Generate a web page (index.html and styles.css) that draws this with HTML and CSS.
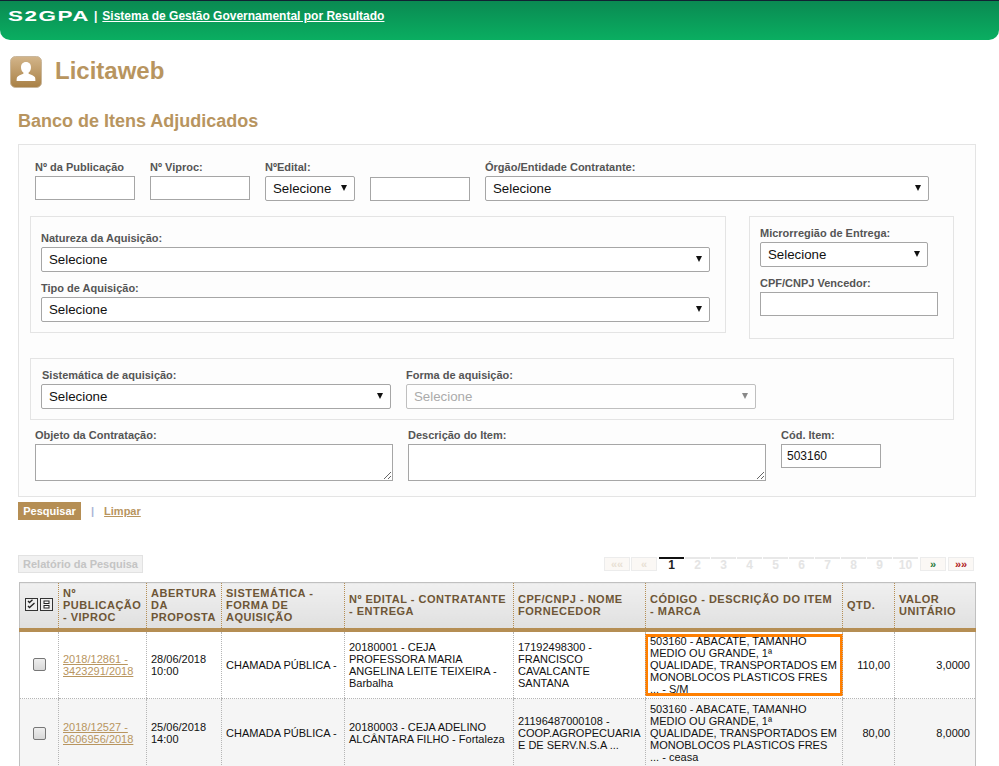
FILE: index.html
```html
<!DOCTYPE html>
<html lang="pt-BR">
<head>
  <meta charset="UTF-8">
  <title>Licitaweb</title>
  <link rel="stylesheet" href="styles.css">
</head>
<body>
  <header class="topo">
    <span class="logo-box"><span class="logo">S2GPA</span></span>
    <span class="barra">|</span>
    <a href="#" class="sistema">Sistema de Gestão Governamental por Resultado</a>
  </header>

  <div class="modulo">
    <svg class="modulo-icone" width="33" height="33" viewBox="0 0 33 33">
      <defs>
        <linearGradient id="tan" x1="0" y1="0" x2="0" y2="1">
          <stop offset="0" stop-color="#d3b58a"/>
          <stop offset="1" stop-color="#a88045"/>
        </linearGradient>
      </defs>
      <rect x="0.5" y="0.5" width="31" height="31" rx="5" fill="url(#tan)" stroke="#c9b79c"/>
      <path d="M16 6c-3.300 0-5 2.400-5 5.300 0 2.400 1 4.300 2.400 5.300v1.200c-2.600 0.800-5.400 2-6.400 3.500-0.400 0.700-0.400 3.700-0.400 3.700h18.800s0-3-0.400-3.700c-1-1.500-3.800-2.700-6.400-3.500v-1.200c1.400-1 2.400-2.900 2.400-5.300 0-2.900-1.700-5.300-5-5.300z" fill="#fff"/>
    </svg>
    <h1>Licitaweb</h1>
  </div>

  <h2>Banco de Itens Adjudicados</h2>

  <form class="filtros">
    <div class="linha linha-topo">
      <div class="campo c100">
        <label>Nº da Publicação</label>
        <input type="text">
      </div>
      <div class="campo c100">
        <label>Nº Viproc:</label>
        <input type="text">
      </div>
      <div class="campo c90">
        <label>NºEdital:</label>
        <div class="sel"><select><option>Selecione</option></select></div>
      </div>
      <div class="campo c100 sem-label">
        <input type="text">
      </div>
      <div class="campo c444">
        <label>Órgão/Entidade Contratante:</label>
        <div class="sel"><select><option>Selecione</option></select></div>
      </div>
    </div>

    <div class="grupos">
      <fieldset class="grupo grupo-natureza">
        <label>Natureza da Aquisição:</label>
        <div class="sel"><select><option>Selecione</option></select></div>
        <label class="label-2">Tipo de Aquisição:</label>
        <div class="sel"><select><option>Selecione</option></select></div>
      </fieldset>
      <fieldset class="grupo grupo-micro">
        <label>Microrregião de Entrega:</label>
        <div class="sel sel-micro"><select><option>Selecione</option></select></div>
        <label class="label-2">CPF/CNPJ Vencedor:</label>
        <input type="text">
      </fieldset>
    </div>

    <fieldset class="grupo grupo-sistematica">
      <div class="campo c350">
        <label>Sistemática de aquisição:</label>
        <div class="sel"><select><option>Selecione</option></select></div>
      </div>
      <div class="campo c350">
        <label>Forma de aquisição:</label>
        <div class="sel sel-off"><select disabled><option>Selecione</option></select></div>
      </div>
    </fieldset>

    <div class="linha linha-textos">
      <div class="campo c358">
        <label>Objeto da Contratação:</label>
        <textarea></textarea>
      </div>
      <div class="campo c358">
        <label>Descrição do Item:</label>
        <textarea></textarea>
      </div>
      <div class="campo c100">
        <label>Cód. Item:</label>
        <input type="text" value="503160">
      </div>
    </div>
  </form>

  <div class="acoes">
    <a href="#" class="btn-pesquisar">Pesquisar</a>
    <span class="sep">|</span>
    <a href="#" class="limpar">Limpar</a>
  </div>

  <div class="barra-resultado">
    <a href="#" class="btn-relatorio">Relatório da Pesquisa</a>
    <div class="paginas">
      <a href="#" class="pg-seta pg-off">««</a>
      <a href="#" class="pg-seta pg-off">«</a>
      <a href="#" class="pg pg-atual">1</a>
      <a href="#" class="pg">2</a>
      <a href="#" class="pg">3</a>
      <a href="#" class="pg">4</a>
      <a href="#" class="pg">5</a>
      <a href="#" class="pg">6</a>
      <a href="#" class="pg">7</a>
      <a href="#" class="pg">8</a>
      <a href="#" class="pg">9</a>
      <a href="#" class="pg">10</a>
      <a href="#" class="pg-seta pg-prox">»</a>
      <a href="#" class="pg-seta pg-ult">»»</a>
    </div>
  </div>

  <table class="tabela">
    <colgroup>
      <col class="col-check">
      <col class="col-pub">
      <col class="col-abertura">
      <col class="col-sist">
      <col class="col-edital">
      <col class="col-cnpj">
      <col class="col-item">
      <col class="col-qtd">
      <col class="col-valor">
    </colgroup>
    <thead>
      <tr>
        <th class="th-check">
          <svg width="29" height="14" viewBox="0 0 29 14">
            <rect x="0.500" y="0.500" width="12" height="12" fill="#eee" stroke="#333"/>
            <path d="M3 3l1.500 1.500L7.500 1.800M3 8l1.500 1.500L9.500 5" fill="none" stroke="#222" stroke-width="1.300"/>
            <rect x="15.500" y="0.500" width="12" height="12" fill="#eee" stroke="#333"/>
            <rect x="19" y="3" width="5" height="2.500" fill="#fff" stroke="#222"/>
            <rect x="19" y="7.500" width="5" height="2.500" fill="#fff" stroke="#222"/>
          </svg>
        </th>
        <th>Nº Publicação - Viproc</th>
        <th>Abertura da Proposta</th>
        <th>Sistemática - Forma de Aquisição</th>
        <th>Nº Edital - Contratante - Entrega</th>
        <th>CPF/CNPJ - Nome Fornecedor</th>
        <th>Código - Descrição do Item - Marca</th>
        <th>Qtd.</th>
        <th>Valor Unitário</th>
      </tr>
    </thead>
    <tbody>
      <tr>
        <td class="td-check"><input type="checkbox"></td>
        <td><a href="#">2018/12861 - 3423291/2018</a></td>
        <td>28/06/2018 10:00</td>
        <td>CHAMADA PÚBLICA -</td>
        <td>20180001 - CEJA PROFESSORA MARIA ANGELINA LEITE TEIXEIRA - Barbalha</td>
        <td>17192498300 - FRANCISCO CAVALCANTE SANTANA</td>
        <td class="td-destaque">
          <div class="destaque"><div>503160 - ABACATE, TAMANHO MEDIO OU GRANDE, 1ª QUALIDADE, TRANSPORTADOS EM MONOBLOCOS PLASTICOS FRES ... - S/M</div></div>
        </td>
        <td class="num">110,00</td>
        <td class="num">3,0000</td>
      </tr>
      <tr class="par">
        <td class="td-check"><input type="checkbox"></td>
        <td><a href="#">2018/12527 - 0606956/2018</a></td>
        <td>25/06/2018 14:00</td>
        <td>CHAMADA PÚBLICA -</td>
        <td>20180003 - CEJA ADELINO ALCÂNTARA FILHO - Fortaleza</td>
        <td>21196487000108 - COOP.AGROPECUARIA E DE SERV.N.S.A ...</td>
        <td>503160 - ABACATE, TAMANHO MEDIO OU GRANDE, 1ª QUALIDADE, TRANSPORTADOS EM MONOBLOCOS PLASTICOS FRES ... - ceasa</td>
        <td class="num">80,00</td>
        <td class="num">8,0000</td>
      </tr>
    </tbody>
  </table>
</body>
</html>
```

FILE: styles.css
```css
* {
  box-sizing: border-box;
}

html {
  overflow: hidden;
}

body {
  margin: 0;
  font-family: "Liberation Sans", Arial, sans-serif;
  font-size: 12px;
  color: #111;
  background: #fff;
}

/* topo */
.topo {
  height: 40px;
  padding: 8px 0 0 8px;
  display: flex;
  align-items: flex-start;
  background: linear-gradient(to bottom, #0a8a52, #0aae61);
  border-top: 1px solid #123;
  border-bottom-left-radius: 10px;
  border-bottom-right-radius: 10px;
  color: #fff;
}

.logo-box {
  width: 81px;
  height: 14px;
  display: block;
}

.logo {
  display: inline-block;
  font-size: 15px;
  font-weight: bold;
  line-height: 14px;
  letter-spacing: 1px;
  transform: scaleX(1.5);
  transform-origin: left center;
}

.barra {
  margin-left: 5px;
  font-size: 12px;
  font-weight: bold;
  line-height: 14px;
}

.sistema {
  margin-left: 5px;
  font-size: 12px;
  font-weight: bold;
  line-height: 14px;
  color: #fff;
}

/* titulos */
.modulo {
  height: 33px;
  margin: 16px 0 0 10px;
  display: flex;
  align-items: center;
}

.modulo-icone {
  flex: none;
}

h1 {
  margin: 0 0 4px 12px;
  font-size: 24px;
  color: #b8955f;
}

h2 {
  margin: 22px 0 12px 18px;
  font-size: 18px;
  line-height: 21px;
  color: #b8955f;
}

/* filtros */
.filtros {
  width: 958px;
  height: 353px;
  margin-left: 18px;
  padding: 16px 11px 0;
  background: #fdfdfd;
  border: 1px solid #e4e4e4;
}

label {
  display: block;
  height: 15px;
  font-size: 11px;
  line-height: 13px;
  font-weight: bold;
  color: #555;
}

input[type="text"],
textarea {
  display: block;
  width: 100%;
  height: 24px;
  padding: 0 5px;
  font-family: "Liberation Sans", Arial, sans-serif;
  font-size: 12px;
  color: #111;
  background: #fff;
  border: 1px solid #a6a6a6;
  border-radius: 0;
}

textarea {
  height: 37px;
}

.sel {
  position: relative;
}

.sel select {
  display: block;
  width: 100%;
  height: 25px;
  padding: 0 7px;
  font-family: "Liberation Sans", Arial, sans-serif;
  font-size: 13.300px;
  color: #111;
  background: #fff;
  border: 1px solid #a6a6a6;
  border-radius: 2px;
  appearance: none;
}

.sel::after {
  content: "";
  position: absolute;
  top: 9px;
  right: 8px;
  border-style: solid;
  border-width: 6px 3px 0;
  border-color: #111 transparent transparent;
  pointer-events: none;
}

.sel-off select {
  color: #888;
}

.sel-off::after {
  border-top-color: #888;
}

.linha {
  display: flex;
  gap: 15px;
  padding-left: 5px;
}

.c100 { width: 100px; }
.c90 { width: 90px; }
.c444 { width: 444px; }
.c350 { width: 350px; }
.c358 { width: 358px; }

.sem-label {
  padding-top: 16px;
}

.grupo {
  margin: 0;
  padding: 0;
  border: 1px solid #e4e4e4;
  background: #fdfdfd;
  min-width: 0;
}

.grupos {
  display: flex;
  justify-content: space-between;
  width: 924px;
  margin-top: 15px;
}

.grupo-natureza {
  width: 696px;
  height: 117px;
  padding: 15px 15px 0 10px;
}

.grupo-micro {
  width: 205px;
  height: 123px;
  padding: 10px 15px 0 10px;
}

.sel-micro {
  width: 168px;
}

.label-2 {
  margin-top: 10px;
}

.grupo-sistematica {
  display: flex;
  gap: 15px;
  width: 924px;
  height: 62px;
  margin-top: 19px;
  padding: 10px 0 0 10px;
}

.grupo-sistematica .campo:first-child label {
  padding-left: 1px;
}

.linha-textos {
  margin-top: 9px;
}

/* acoes */
.acoes {
  height: 18px;
  margin: 5px 0 0 18px;
  display: flex;
  align-items: center;
  font-size: 11px;
  font-weight: bold;
}

.btn-pesquisar {
  width: 63px;
  height: 18px;
  line-height: 18px;
  text-align: center;
  color: #fff;
  background: #b58e54;
  text-decoration: none;
}

.sep {
  margin-left: 10px;
  color: #a9b4d6;
}

.limpar {
  margin-left: 10px;
  color: #b8955f;
}

.barra-resultado {
  width: 956px;
  height: 18px;
  margin: 35px 0 0 18px;
  display: flex;
  justify-content: space-between;
}

.btn-relatorio {
  width: 125px;
  height: 18px;
  line-height: 16px;
  text-align: center;
  font-size: 11px;
  font-weight: bold;
  color: #c4c4c4;
  background: #f1f1f1;
  border: 1px solid #e2e2e2;
  text-decoration: none;
}

.paginas {
  display: flex;
  gap: 0;
  padding-top: 2px;
  font-size: 11px;
  font-weight: bold;
}

.pg,
.pg-seta {
  height: 14px;
  text-align: center;
  text-decoration: none;
  line-height: 13px;
}

.pg {
  width: 25px;
  margin-right: 1px;
  font-size: 12px;
  color: #e4e4e4;
  border-top: 2px solid #e8e8e8;
}

.pg-atual {
  color: #222;
  border-top-color: #111;
}

.pg-seta {
  width: 26px;
  margin-right: 2px;
  background: #fbf8f5;
  border: 1px solid #ececec;
}

.pg-off {
  color: #e8e0d4;
  margin-right: 1px;
}

.pg-off + .pg-off {
  margin-right: 2px;
}

.pg-prox {
  color: #2a7a3a;
  margin-left: 1px;
}

.pg-ult {
  color: #b02020;
  margin-right: 0;
}

/* tabela */
.tabela {
  width: 956px;
  margin: 9px 0 0 19px;
  table-layout: fixed;
  border-collapse: collapse;
  border-top: 1px solid #c0c0c0;
  border-left: 1px solid #c0c0c0;
  border-right: 1px solid #c0c0c0;
}

.col-check { width: 39px; }
.col-pub { width: 88px; }
.col-abertura { width: 75px; }
.col-sist { width: 123px; }
.col-edital { width: 169px; }
.col-cnpj { width: 132px; }
.col-item { width: 197px; }
.col-qtd { width: 52px; }
.col-valor { width: 81px; }

.tabela th {
  height: 47px;
  padding: 0 4px;
  font-size: 11px;
  line-height: 12px;
  letter-spacing: 0.500px;
  text-align: left;
  text-transform: uppercase;
  color: #6e5636;
  background: linear-gradient(to bottom, #f0f0f0, #e0e0e0);
  border-left: 1px dotted #b58e54;
  border-bottom: 4px solid #b58e54;
}

.tabela th:first-child {
  border-left: 0;
}

.th-check {
  text-align: center;
}

.th-check svg {
  display: block;
  margin: 0 0 0 1px;
}

.tabela td {
  height: 69px;
  padding: 0 4px;
  font-size: 11px;
  line-height: 12px;
  border-left: 1px dotted #b5b5b5;
  border-bottom: 1px dotted #b5b5b5;
}

.tabela td:first-child {
  border-left: 0;
}

.tabela a {
  color: #b8955f;
}

.par td {
  background: #f5f5f5;
}

.td-check {
  text-align: center;
}

.td-check input {
  display: block;
  width: 13px;
  height: 13px;
  margin: 0 auto;
  appearance: none;
  background: linear-gradient(to bottom, #eee, #d8d8d8);
  border: 1px solid #777;
  border-radius: 2px;
}

.tabela .num {
  padding-right: 4px;
  text-align: right;
}

.tabela .num:last-child {
  padding-right: 5px;
}

.tabela .td-destaque {
  padding: 0;
}

.destaque {
  display: flex;
  align-items: center;
  height: 62px;
  margin: 0 -1px;
  padding: 0 2px;
  background: #fff;
  border: 3px solid #ff7f00;
}
```
